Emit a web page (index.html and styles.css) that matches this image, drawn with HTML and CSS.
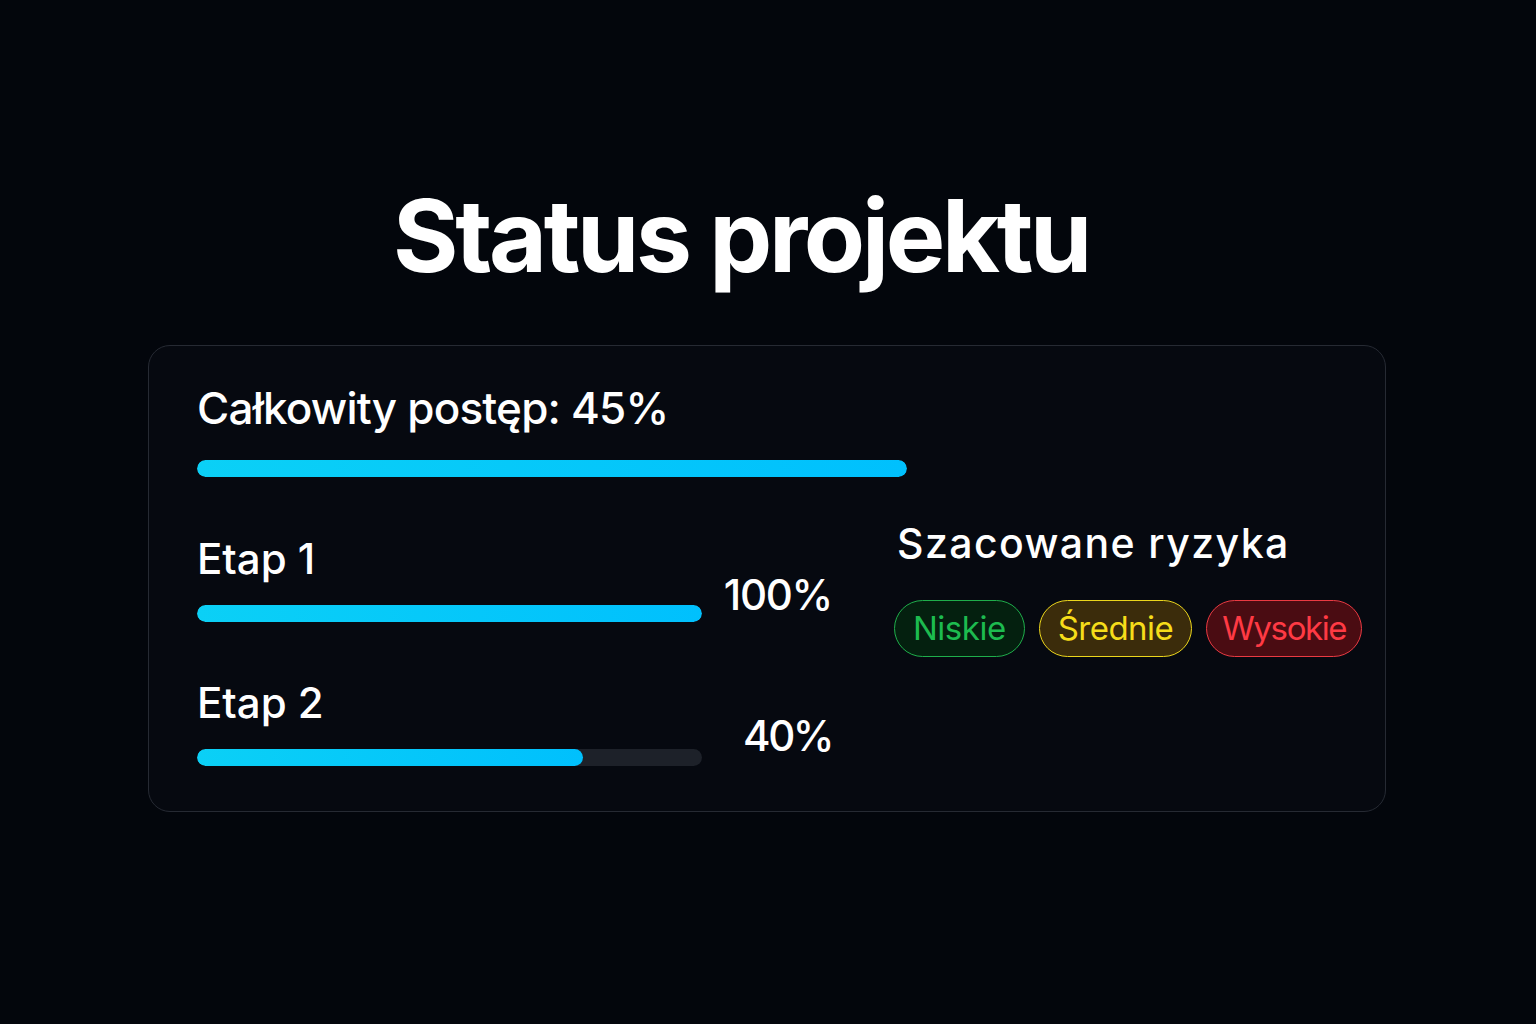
FILE: index.html
```html
<!DOCTYPE html>
<html lang="pl">
<head>
  <meta charset="UTF-8">
  <title>Status projektu</title>
  <link rel="stylesheet" href="styles.css">
</head>
<body>
  <h1 class="title">Status projektu</h1>

  <div class="card">
    <!-- Overall progress -->
    <div class="overall">
      <div class="overall-label">Całkowity postęp: 45%</div>
      <div class="bar bar-overall"><div class="bar-fill" style="width: 100%;"></div></div>
    </div>

    <div class="card-body">
      <!-- Stages -->
      <div class="stages">
        <div class="stage">
          <div class="stage-main">
            <div class="stage-label">Etap 1</div>
            <div class="bar"><div class="bar-fill" style="width: 100%;"></div></div>
          </div>
          <div class="stage-pct">100%</div>
        </div>
        <div class="stage stage-2">
          <div class="stage-main">
            <div class="stage-label">Etap 2</div>
            <div class="bar"><div class="bar-fill" style="width: 76.5%;"></div></div>
          </div>
          <div class="stage-pct">40%</div>
        </div>
      </div>

      <!-- Risks -->
      <div class="risks">
        <div class="risks-title">Szacowane ryzyka</div>
        <div class="pills">
          <span class="pill low">Niskie</span>
          <span class="pill medium">Średnie</span>
          <span class="pill high">Wysokie</span>
        </div>
      </div>
    </div>
  </div>
</body>
</html>
```

FILE: styles.css
```css
body {
  margin: 0;
  padding: 186px 0 0;
  min-height: 1024px;
  box-sizing: border-box;
  font-family: Inter, "Noto Sans", sans-serif;
  background: #03060c;
  color: #ffffff;
}

.title {
  margin: 0 0 59px;
  padding-right: 54px;
  font-size: 100px;
  line-height: 1;
  font-weight: 700;
  letter-spacing: -3.3px;
  text-align: center;
}

.card {
  width: 1238px;
  margin-left: 148px;
  box-sizing: border-box;
  padding: 36px 48px 45px;
  border: 1px solid #262a33;
  border-radius: 22px;
  background: #060910;
}

.overall-label {
  font-size: 44px;
  line-height: 1.2;
  font-weight: 500;
  letter-spacing: -0.8px;
}

.bar {
  height: 17px;
  border-radius: 9px;
  background: #1d2129;
  overflow: hidden;
}

.bar-fill {
  height: 100%;
  border-radius: 9px;
  background: linear-gradient(90deg, #0bd0f6 0%, #00c0fd 100%);
}

.bar-overall {
  width: 710px;
  margin-top: 25px;
}

.card-body {
  display: flex;
  margin-top: 57px;
  gap: 62px;
}

.stages {
  flex: none;
  width: 635px;
}

.stage {
  display: flex;
  justify-content: space-between;
}

.stage-2 {
  margin-top: 56px;
}

.stage-main {
  width: 505px;
}

.stage-label {
  font-size: 42px;
  line-height: 1.2;
  font-weight: 500;
  margin-bottom: 21px;
}

.stage-2 .stage-label {
  margin-bottom: 20px;
}

.stage-pct {
  align-self: flex-end;
  margin-bottom: 2px;
  font-size: 42px;
  line-height: 1.2;
  font-weight: 500;
  letter-spacing: -1.3px;
}

.stage-2 .stage-pct {
  margin-bottom: 4px;
  letter-spacing: -2.5px;
}

.risks {
  margin-top: -15px;
}

.risks-title {
  padding-left: 3px;
  font-size: 41px;
  line-height: 1.2;
  font-weight: 500;
  letter-spacing: 1.4px;
}

.pills {
  display: flex;
  gap: 14px;
  margin-top: 32px;
}

.pill {
  display: flex;
  align-items: center;
  height: 57px;
  box-sizing: border-box;
  padding: 0 18px;
  border: 1.5px solid;
  border-radius: 29px;
  font-size: 33px;
  letter-spacing: -0.5px;
}

.pill.low {
  color: #1dbb4f;
  border-color: #1fae4b;
  background: #04200f;
}

.pill.medium {
  color: #f6dd1a;
  border-color: #ecd61c;
  background: #3b2c0b;
}

.pill.high {
  padding: 0 15px;
  color: #ff3a44;
  border-color: #ea3a42;
  background: #4a0c12;
  letter-spacing: -1.4px;
}
```
